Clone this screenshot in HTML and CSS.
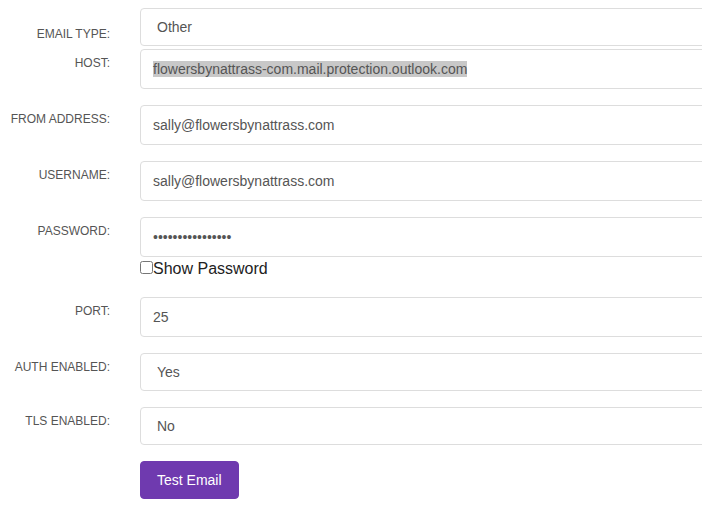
FILE: index.html
```html
<!DOCTYPE html>
<html lang="en">
<head>
<meta charset="utf-8">
<title>Email Settings</title>
<link rel="stylesheet" href="styles.css">
</head>
<body>
<form class="settings">
  <div class="row row-first">
    <label class="label label-low">Email Type:</label>
    <select class="control select"><option>Other</option><option>Office 365</option><option>Gmail</option></select>
  </div>
  <div class="row row-tight">
    <label class="label">Host:</label>
    <div class="control"><span class="selected">flowersbynattrass-com.mail.protection.outlook.com</span></div>
  </div>
  <div class="row">
    <label class="label">From Address:</label>
    <input class="control" type="text" value="sally@flowersbynattrass.com">
  </div>
  <div class="row">
    <label class="label">Username:</label>
    <input class="control" type="text" value="sally@flowersbynattrass.com">
  </div>
  <div class="row">
    <label class="label">Password:</label>
    <div class="field">
      <input class="control" type="password" value="abcdefghijklmnop">
      <label class="show"><input class="check" type="checkbox">Show Password</label>
    </div>
  </div>
  <div class="row">
    <label class="label">Port:</label>
    <input class="control" type="text" value="25">
  </div>
  <div class="row">
    <label class="label">Auth Enabled:</label>
    <select class="control select"><option>Yes</option><option>No</option></select>
  </div>
  <div class="row">
    <label class="label">TLS Enabled:</label>
    <select class="control select"><option>No</option><option>Yes</option></select>
  </div>
  <div class="row">
    <button class="btn" type="button">Test Email</button>
  </div>
</form>
</body>
</html>
```

FILE: styles.css
```css
html, body {
  margin: 0;
  padding: 0;
  overflow: hidden;
  background: #fff;
}

body {
  font-family: "Liberation Sans", Arial, sans-serif;
}

.settings {
  display: flex;
  flex-direction: column;
  width: 100%;
  padding-top: 8px;
  overflow: hidden;
}

.row {
  display: grid;
  grid-template-columns: 110px 640px;
  column-gap: 30px;
  align-items: start;
  margin-top: 16px;
}

.row-first {
  margin-top: 0;
}

.row-tight {
  margin-top: 3px;
}

.label {
  font-size: 12px;
  line-height: 14px;
  color: #555;
  text-align: right;
  text-transform: uppercase;
  padding-top: 7px;
}

.label-low {
  padding-top: 19px;
}

.control {
  box-sizing: border-box;
  width: 100%;
  height: 40px;
  margin: 0;
  padding: 0 12px;
  border: 1px solid #ddd;
  border-radius: 4px;
  background: #fff;
  color: #555;
  font-family: "Liberation Sans", Arial, sans-serif;
  font-size: 14px;
  line-height: 16px;
  outline: none;
}

div.control {
  display: flex;
  align-items: center;
}

.selected {
  background: #c8c8c8;
}

.select {
  height: 38px;
  padding-left: 16px;
  appearance: none;
  -webkit-appearance: none;
}

.field {
  display: flex;
  flex-direction: column;
}

.show {
  display: block;
  margin: 3px 0 3px;
  font-size: 16px;
  line-height: 18px;
  color: #222;
}

.check {
  margin: 0;
}

.btn {
  grid-column: 2;
  justify-self: start;
  box-sizing: border-box;
  height: 38px;
  padding: 0 16px;
  border: 1px solid #6f3aaf;
  border-radius: 4px;
  background: #6f3aaf;
  color: #fff;
  font-family: "Liberation Sans", Arial, sans-serif;
  font-size: 14px;
  cursor: pointer;
}
```
